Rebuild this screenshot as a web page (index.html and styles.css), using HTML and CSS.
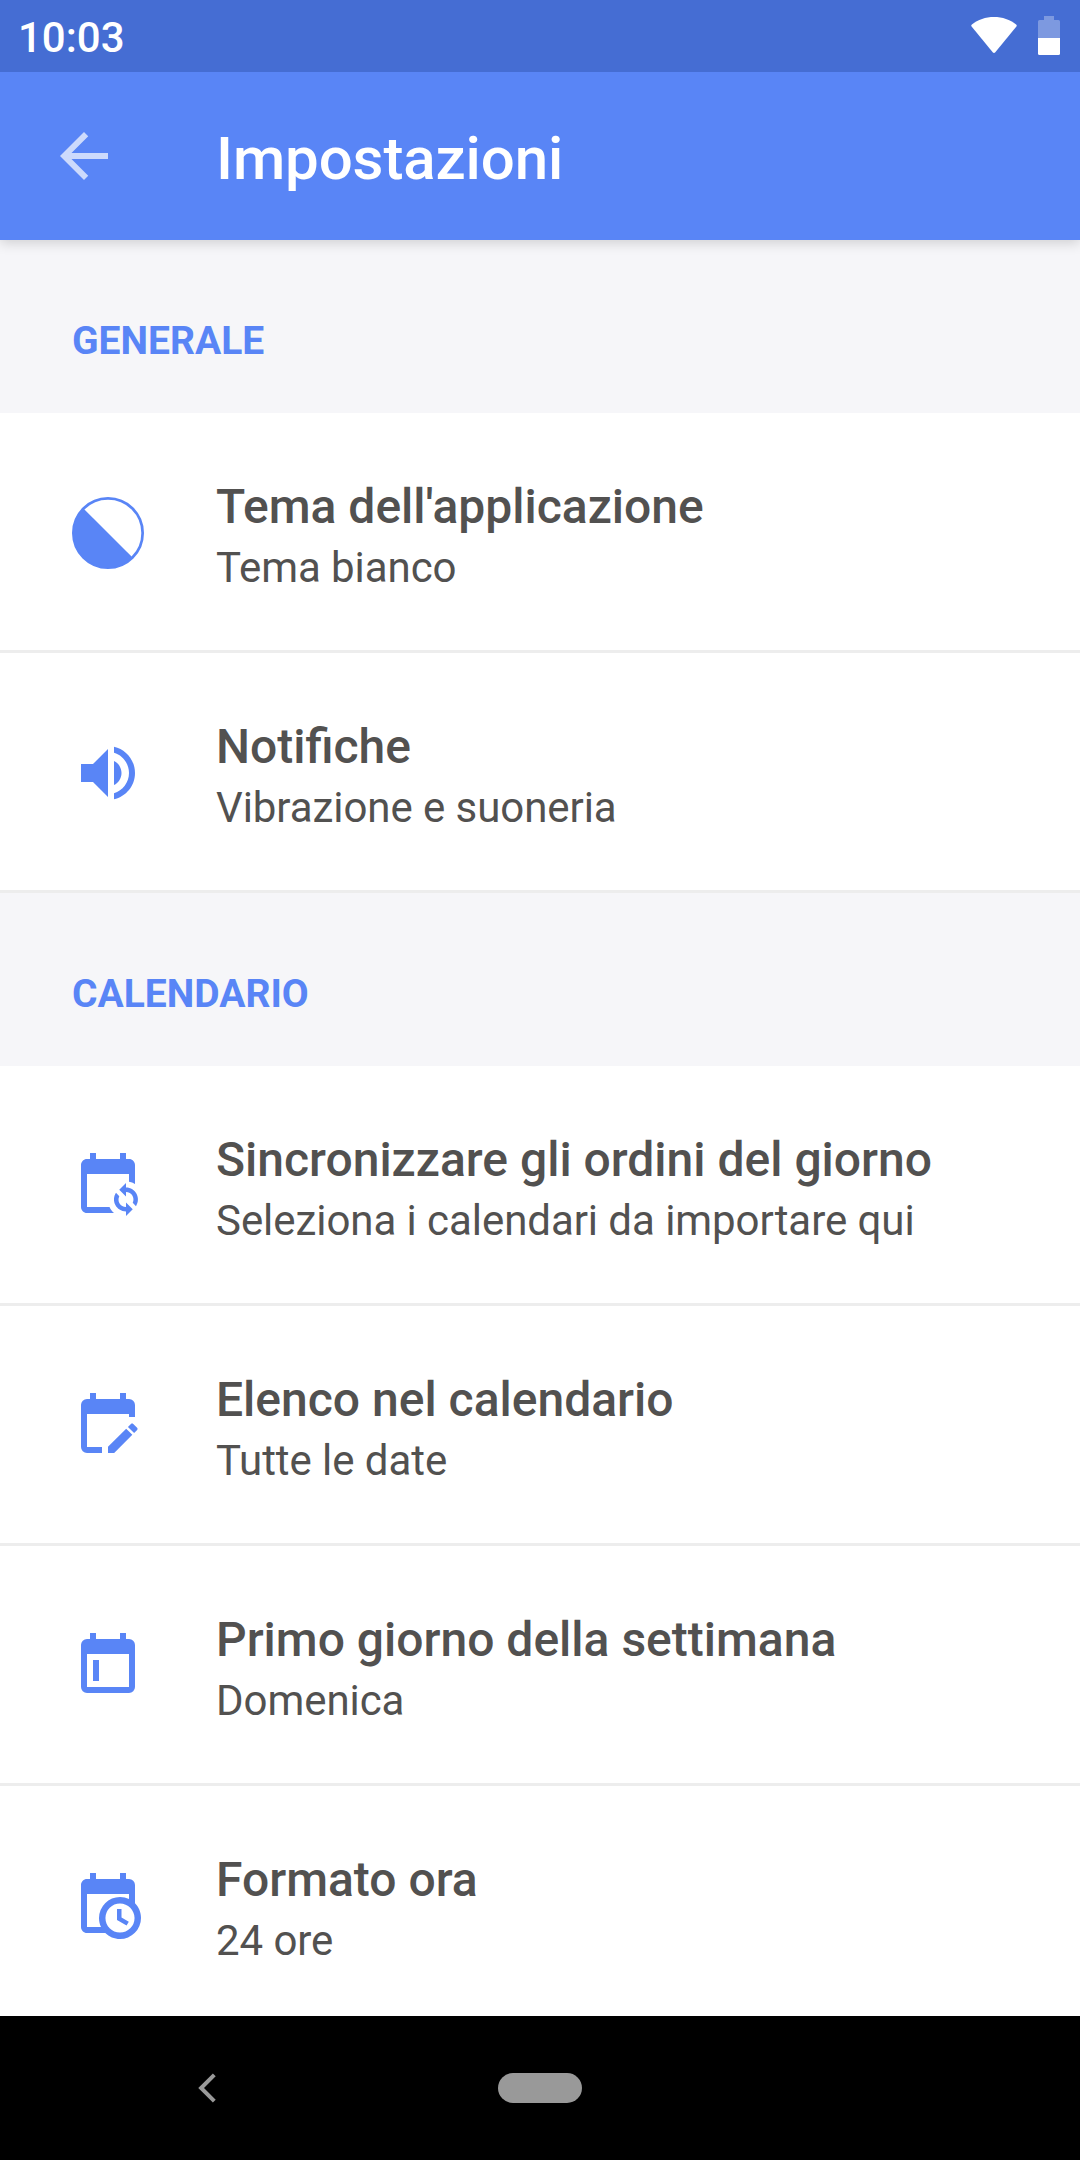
FILE: index.html
```html
<!DOCTYPE html>
<html lang="it">
<head>
<meta charset="utf-8">
<title>Impostazioni</title>
<link rel="stylesheet" href="styles.css">
</head>
<body>
<div class="screen">
  <div class="status-bar">
    <span class="clock">10:03</span>
    <svg class="wifi" viewBox="0 0 46 36"><path d="M.6 9.4Q-.2 8.300 .9 7.400C7 2.600 14.500 0 23 0S39 2.600 45.100 7.400Q46.200 8.300 45.400 9.400L24.300 35.200Q23 36.600 21.700 35.200Z"/></svg>
    <svg class="battery" viewBox="0 0 22 39"><path class="battery-empty" d="M6 0h10v4h4.500a1.500 1.500 0 0 1 1.500 1.500V22H0V5.500A1.500 1.500 0 0 1 1.500 4H6z"/><path d="M0 22h22v15.500a1.500 1.500 0 0 1-1.500 1.500h-19A1.500 1.500 0 0 1 0 37.500z"/></svg>
  </div>
  <header class="toolbar">
    <svg class="icon back" viewBox="0 0 24 24"><path d="M20 11H7.830l5.590-5.590L12 4l-8 8 8 8 1.410-1.410L7.830 13H20v-2z"/></svg>
    <h1 class="title">Impostazioni</h1>
  </header>
  <main class="content">
    <h2 class="section">GENERALE</h2>
    <div class="row">
      <svg class="icon" viewBox="0 0 24 24"><circle cx="12" cy="12" r="11.550" fill="none" stroke="currentColor" stroke-width=".9"/><path d="M3.900 3.900A11.450 11.450 0 1 0 20.100 20.100z"/></svg>
      <div class="text"><div class="name">Tema dell'applicazione</div><div class="value">Tema bianco</div></div>
    </div>
    <div class="row">
      <svg class="icon" viewBox="0 0 24 24"><path d="M3 9v6h4l5 5V4L7 9H3zm13.500 3c0-1.770-1.020-3.290-2.500-4.030v8.050c1.480-.73 2.500-2.250 2.500-4.020zM14 3.230v2.060c2.890.86 5 3.540 5 6.710s-2.110 5.850-5 6.710v2.060c4.010-.91 7-4.490 7-8.770s-2.990-7.860-7-8.770z"/></svg>
      <div class="text"><div class="name">Notifiche</div><div class="value">Vibrazione e suoneria</div></div>
    </div>
    <h2 class="section">CALENDARIO</h2>
    <div class="row">
      <svg class="icon" viewBox="0 0 24 24"><path d="M18 11V12.500C21.190 12.500 23.090 16.050 21.330 18.710L20.240 17.620C21.060 15.960 19.850 14 18 14V15.500L15.750 13.250L18 11M18 22V20.500C14.810 20.500 12.910 16.950 14.670 14.290L15.760 15.380C14.940 17.040 16.150 19 18 19V17.500L20.250 19.750L18 22M19 3H18V1H16V3H8V1H6V3H5C3.900 3 3 3.900 3 5V19C3 20.100 3.900 21 5 21H14C13.360 20.450 12.860 19.770 12.500 19H5V8H19V10.590C19.710 10.700 20.390 10.940 21 11.310V5C21 3.900 20.100 3 19 3Z"/></svg>
      <div class="text"><div class="name">Sincronizzare gli ordini del giorno</div><div class="value">Seleziona i calendari da importare qui</div></div>
    </div>
    <div class="row">
      <svg class="icon" viewBox="0 0 24 24"><path d="M19 3H18V1H16V3H8V1H6V3H5A2 2 0 0 0 3 5V19A2 2 0 0 0 5 21H10V19H5V8H19V9H21V5A2 2 0 0 0 19 3M21.700 13.350L20.700 14.350L18.650 12.300L19.650 11.300C19.860 11.090 20.210 11.090 20.420 11.300L21.700 12.580C21.910 12.790 21.910 13.140 21.700 13.350M12 18.940L18.060 12.880L20.110 14.930L14.060 21H12V18.940Z"/></svg>
      <div class="text"><div class="name">Elenco nel calendario</div><div class="value">Tutte le date</div></div>
    </div>
    <div class="row">
      <svg class="icon" viewBox="0 0 24 24"><path d="M19 3h-1V1h-2v2H8V1H6v2H5a2 2 0 0 0-2 2v14a2 2 0 0 0 2 2h14a2 2 0 0 0 2-2V5a2 2 0 0 0-2-2zm0 16H5V8h14v11zM7 10h2v7H7z"/></svg>
      <div class="text"><div class="name">Primo giorno della settimana</div><div class="value">Domenica</div></div>
    </div>
    <div class="row">
      <svg class="icon" viewBox="0 0 24 24"><path d="M15 13H16.500V15.820L18.940 17.230L18.190 18.530L15 16.690V13M19 8H5V19H9.670C9.240 18.090 9 17.070 9 16A7 7 0 0 1 16 9C17.070 9 18.090 9.240 19 9.670V8M5 21C3.890 21 3 20.100 3 19V5C3 3.890 3.890 3 5 3H6V1H8V3H16V1H18V3H19A2 2 0 0 1 21 5V11.100C22.240 12.360 23 14.090 23 16A7 7 0 0 1 16 23C14.090 23 12.360 22.240 11.100 21H5M16 11.150A4.850 4.850 0 0 0 11.150 16C11.150 18.680 13.320 20.850 16 20.850A4.850 4.850 0 0 0 20.850 16C20.850 13.320 18.680 11.150 16 11.150Z"/></svg>
      <div class="text"><div class="name">Formato ora</div><div class="value">24 ore</div></div>
    </div>
  </main>
  <nav class="nav-bar">
    <svg class="nav-back" viewBox="0 0 18 30"><path d="M16.300 1.800L3.100 15 16.300 28.200" fill="none" stroke="#999" stroke-width="4"/></svg>
    <div class="nav-home"></div>
    <div></div>
  </nav>
</div>
</body>
</html>
```
FILE: styles.css
```css
* { box-sizing: border-box; }

body {
  margin: 0;
  font-family: Roboto, sans-serif;
  background: #fff;
}

.screen {
  width: 1080px;
  height: 2160px;
  display: flex;
  flex-direction: column;
  overflow: hidden;
}

svg { display: block; flex: none; fill: currentColor; }

.status-bar {
  flex: none;
  height: 72px;
  display: flex;
  align-items: flex-start;
  padding: 0 20px 0 18px;
  background: #456dd3;
  color: #fff;
  z-index: 2;
}

.clock {
  flex: 1;
  font-size: 42px;
  line-height: 50px;
  padding-top: 13px;
  font-weight: 500;
}

.wifi { width: 46px; height: 36px; margin: 17px 21px 0 0; }
.battery { width: 22px; height: 39px; margin-top: 16px; }
.battery-empty { opacity: .3; }

.toolbar {
  flex: none;
  height: 168px;
  display: flex;
  align-items: center;
  padding-left: 48px;
  background: #5985f6;
  color: #fff;
  box-shadow: 0 3px 12px rgba(0, 0, 0, .16);
  z-index: 1;
}

.icon { width: 72px; height: 72px; }
.back { opacity: .7; }

.title {
  margin: 6px 0 0 96px;
  font-size: 60px;
  line-height: 70px;
  font-weight: 500;
  letter-spacing: -.1px;
}

.content { flex: 1; min-height: 0; overflow: hidden; }

.section {
  margin: 0;
  height: 173px;
  padding: 78px 72px 0;
  background: #f6f6f9;
  color: #5985f6;
  font-size: 39px;
  line-height: 46px;
  font-weight: 700;
}

.row {
  height: 240px;
  display: flex;
  align-items: flex-start;
  padding: 0 72px;
  border-bottom: 3px solid #ededed;
  color: #5985f6;
}

.row .icon { margin: 84px 72px 0 0; }

.text { padding-top: 65px; color: #525150; white-space: nowrap; }
.name { font-size: 48px; line-height: 57px; font-weight: 500; }
.value { margin-top: 8px; font-size: 42px; line-height: 50px; letter-spacing: -.06px; }

.nav-bar {
  flex: none;
  height: 144px;
  display: grid;
  grid-template-columns: 498px 84px 498px;
  align-items: center;
  background: #000;
}

.nav-back { width: 18px; height: 30px; margin-left: 198px; }
.nav-home { height: 30px; border-radius: 15px; background: #999; }
```
